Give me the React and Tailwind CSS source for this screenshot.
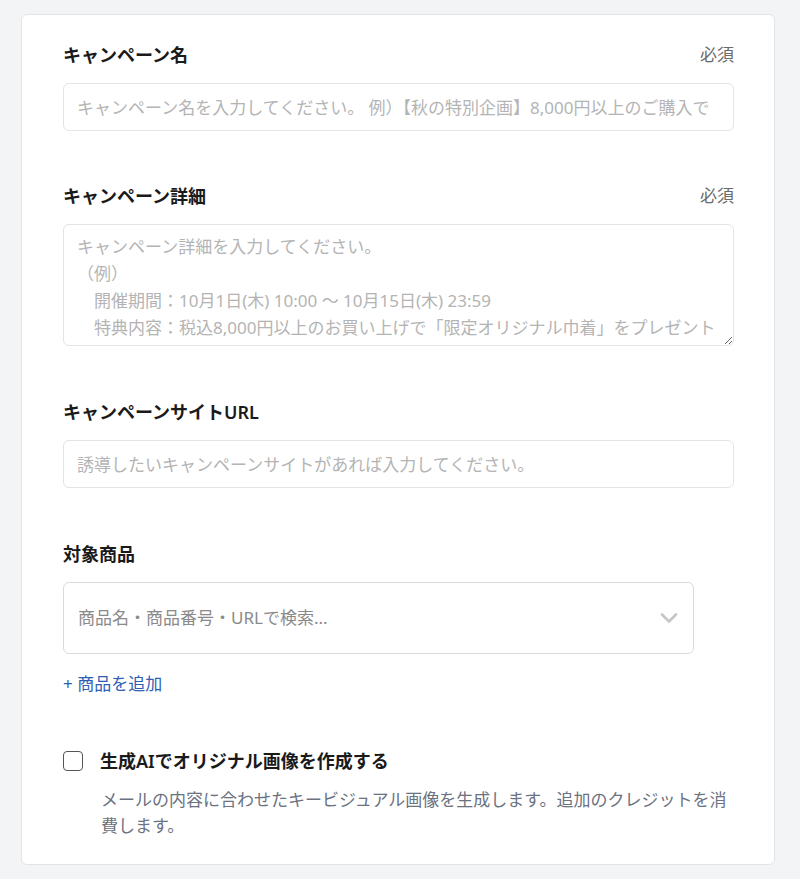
import React from 'react';

const detailPlaceholder =
  "キャンペーン詳細を入力してください。\n（例）\n　開催期間：10月1日(木) 10:00 〜 10月15日(木) 23:59\n　特典内容：税込8,000円以上のお買い上げで「限定オリジナル巾着」をプレゼント\n　対象者：期間中にご購入いただいたすべての会員様（先着100名様）";

const Label = ({ children, required }) => (
  <div className="flex items-center justify-between mb-4">
    <span className="text-[18px] leading-6 font-semibold text-[#1a1a1a]">{children}</span>
    {required && <span className="text-[17px] leading-6 text-[#6b6b6b]">必須</span>}
  </div>
);

const App = () => {
  return (
    <div
      className="min-h-screen bg-[#f3f4f6] pl-[21px] pt-[14px] pb-[14px]"
      style={{ fontFamily: '"Noto Sans", "Noto Sans CJK JP", sans-serif' }}
    >
      <div className="w-[754px] bg-white border border-[#e2e4e8] rounded-md pl-[41px] pr-[40px] pt-7 pb-[25px]">
        <div>
          <Label required>キャンペーン名</Label>
          <input
            type="text"
            placeholder="キャンペーン名を入力してください。 例）【秋の特別企画】8,000円以上のご購入で"
            className="block w-full h-12 px-[13px] border border-[#e3e4e7] rounded-md text-[17px] text-[#1a1a1a] placeholder-[#b4b4b4] focus:outline-none"
          />
        </div>

        <div className="mt-[53px]">
          <Label required>キャンペーン詳細</Label>
          <textarea
            placeholder={detailPlaceholder}
            className="block w-full h-[122px] px-[13px] py-[8px] border border-[#e3e4e7] rounded-md text-[17px] leading-[27px] text-[#1a1a1a] placeholder-[#b4b4b4] focus:outline-none resize-y"
          />
        </div>

        <div className="mt-[54px]">
          <Label>キャンペーンサイトURL</Label>
          <input
            type="text"
            placeholder="誘導したいキャンペーンサイトがあれば入力してください。"
            className="block w-full h-12 px-[13px] border border-[#e3e4e7] rounded-md text-[17px] text-[#1a1a1a] placeholder-[#b4b4b4] focus:outline-none"
          />
        </div>

        <div className="mt-[54px]">
          <Label>対象商品</Label>
          <div className="w-[631px] h-[72px] flex items-center justify-between pl-[14px] pr-[12px] border border-[#d9dadd] rounded-md">
            <span className="text-[17px] text-[#8a8a8a]">商品名・商品番号・URLで検索...</span>
            <svg width="24" height="24" viewBox="0 0 24 24" fill="none" stroke="#c6c6c6" strokeWidth="2.6" strokeLinecap="round" strokeLinejoin="round">
              <path d="M5 8.5l7 7 7-7" />
            </svg>
          </div>
          <a href="#" className="inline-block mt-[18px] text-[17px] leading-6 text-[#2f5fb3]">
            + 商品を追加
          </a>
        </div>

        <div className="mt-[53px]">
          <label className="flex items-center gap-[17px]">
            <span className="w-5 h-5 border-[1.5px] border-[#555] rounded-[4px] shrink-0" />
            <span className="text-[18px] leading-6 font-semibold text-[#1a1a1a]">生成AIでオリジナル画像を作成する</span>
          </label>
          <p className="mt-[14px] pl-[38px] text-[17px] leading-[26px] text-[#6b7280]">
            メールの内容に合わせたキービジュアル画像を生成します。追加のクレジットを消費します。
          </p>
        </div>
      </div>
    </div>
  );
};

export default App;
